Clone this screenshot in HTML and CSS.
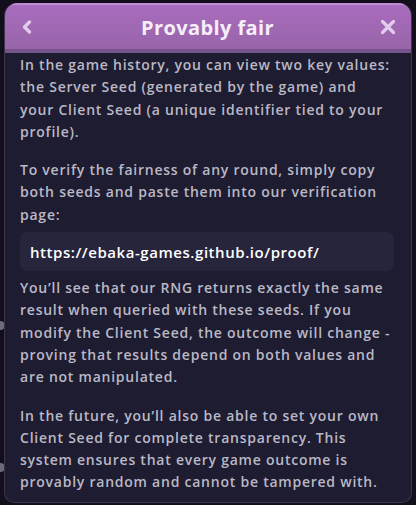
FILE: index.html
```html
<!DOCTYPE html>
<html>
<head>
<meta charset="utf-8">
<link rel="stylesheet" href="styles.css">
</head>
<body>
<span class="bump bump-a"></span>
<span class="bump bump-b"></span>
<div class="modal">
  <div class="header">
    <button class="icon-btn" aria-label="Back">
      <svg width="12" height="14" viewBox="0 0 12 14"><path d="M8.5 2 L3.5 7 L8.5 12" fill="none" stroke="#e3cdec" stroke-width="3.2" stroke-linecap="round" stroke-linejoin="round"/></svg>
    </button>
    <h1 class="title">Provably fair</h1>
    <button class="icon-btn" aria-label="Close">
      <svg width="16" height="16" viewBox="0 0 16 16"><path d="M2.5 2.5 L13.5 13.5 M13.5 2.5 L2.5 13.5" fill="none" stroke="#e3cdec" stroke-width="3.2" stroke-linecap="round"/></svg>
    </button>
  </div>
  <div class="content">
    <p>In the game history, you can view two key values: the Server Seed (generated by the game) and your Client Seed (a unique identifier tied to your profile).</p>
    <p>To verify the fairness of any round, simply copy both seeds and paste them into our verification page:</p>
    <div class="link-box">https://ebaka-games.github.io/proof/</div>
    <p>You’ll see that our RNG returns exactly the same result when queried with these seeds. If you modify the Client Seed, the outcome will change - proving that results depend on both values and are not manipulated.</p>
    <p>In the future, you’ll also be able to set your own Client Seed for complete transparency. This system ensures that every game outcome is provably random and cannot be tampered with. Play with full confidence.</p>
  </div>
</div>
</body>
</html>
```
FILE: styles.css
```css
html, body {
  margin: 0;
  padding: 0;
  background: #120e1c;
  height: 505px;
  overflow: hidden;
}
body {
  font-family: "Open Sans", "DejaVu Sans", sans-serif;
  position: relative;
}
.bump {
  position: absolute;
  left: -4px;
  width: 9px;
  height: 9px;
  border-radius: 50%;
  background: #6d6a78;
}
.bump-a { top: 321px; }
.bump-b { top: 463px; }
.modal {
  position: relative;
  margin: 3px 4px 0 4px;
  height: 500px;
  border-radius: 13px 13px 10px 10px;
  background: #1e1c30;
  border: 1px solid #3a374d;
  border-top: none;
  overflow: hidden;
  display: flex;
  flex-direction: column;
  box-sizing: border-box;
}
.header {
  flex: none;
  height: 50px;
  box-sizing: border-box;
  background: linear-gradient(#a96cbe, #9865a9);
  border-top: 2px solid #c08cd2;
  border-bottom: 4px solid #74548a;
  display: flex;
  align-items: center;
  justify-content: space-between;
  padding: 0 14px 0 13px;
}
.icon-btn {
  background: none;
  border: none;
  padding: 0;
  width: 18px;
  height: 18px;
  display: flex;
  align-items: center;
  justify-content: center;
}
.title {
  margin: 0;
  font-size: 20px;
  font-weight: 700;
  color: #f6eef8;
  letter-spacing: 0.4px;
}
.content {
  flex: 1;
  overflow: hidden;
  padding: 1px 17px 0 15px;
  margin-bottom: 7px;
  position: relative;
}
.content::after {
  content: "";
  position: absolute;
  left: 0;
  right: 0;
  bottom: 0;
  height: 4px;
  background: linear-gradient(rgba(30,28,48,0.5), rgba(30,28,48,0.85));
}
.content p {
  margin: 0 0 16px 0;
  font-size: 14px;
  line-height: 22.3px;
  font-weight: 600;
  color: #bab8c6;
  letter-spacing: 0.76px;
}
.link-box {
  margin: -10px 0 6px 0;
  background: #26253b;
  border-radius: 7px;
  height: 39px;
  display: flex;
  align-items: center;
  padding: 0 10px;
  font-size: 15px;
  font-weight: 600;
  color: #ffffff;
  letter-spacing: 0.55px;
}
```
